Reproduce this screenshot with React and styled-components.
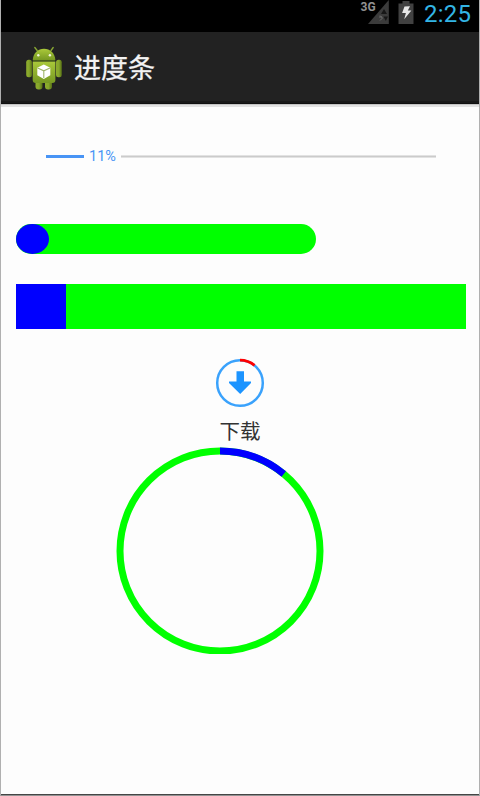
import React from "react";
import styled, { createGlobalStyle } from "styled-components";

const Global = createGlobalStyle`
  * { box-sizing: border-box; }
  body { margin: 0; background: #fdfdfd; }
`;

const Screen = styled.div`
  width: 480px;
  height: 796px;
  display: flex;
  flex-direction: column;
  overflow: hidden;
  background: #fdfdfd;
  border: 1px solid #b0b0b0;
  border-top: 0;
  border-bottom-color: #929292;
  font-family: Roboto, "Noto Sans CJK SC", sans-serif;
`;

const StatusBar = styled.header`
  height: 32px;
  flex: none;
  display: flex;
  justify-content: flex-end;
  background: #000;
`;

const StatusIcons = styled.svg`
  display: block;
  width: 56px;
  height: 32px;
`;

const Clock = styled.time`
  width: 48px;
  margin: 0 7px 0 8px;
  font-size: 24px;
  line-height: 28px;
  letter-spacing: 0.2px;
  white-space: nowrap;
  color: #33b5e5;
`;

const ActionBar = styled.div`
  height: 72px;
  flex: none;
  display: flex;
  align-items: center;
  padding-left: 23px;
  background: linear-gradient(#222 0 69px, #191919 69px 71px, #101010 71px);
`;

const Robot = styled.svg`
  display: block;
  width: 40px;
  height: 48px;
`;

const Title = styled.h1`
  margin: 2px 0 0 10px;
  font-size: 27px;
  line-height: 40px;
  font-weight: 400;
  -webkit-text-stroke: 0.3px #f3f3f3;
  color: #f3f3f3;
`;

const Shadow = styled.div`
  height: 3px;
  flex: none;
  background: linear-gradient(#c4c4c4 0 1px, #e3e3e3 1px 3px);
`;

const Content = styled.main`
  flex: 1;
  display: flex;
  flex-direction: column;
  padding-left: 15px;
`;

const NumberProgress = styled.div`
  width: 390px;
  height: 20px;
  margin: 39px 0 0 30px;
  display: flex;
  align-items: center;
`;

const Reached = styled.div`
  width: 38px;
  height: 3px;
  margin-top: 1px;
  background: #4894f5;
`;

const Percent = styled.span`
  width: 37px;
  padding-top: 2px;
  text-align: center;
  font-size: 14.5px;
  line-height: 20px;
  color: #4894f5;
`;

const Unreached = styled.div`
  flex: 1;
  height: 3px;
  margin-top: 1px;
  background: linear-gradient(#e2e2e2 0 1px, #cbcbcb 1px 2px, #e2e2e2 2px);
`;

const Track = styled.div`
  width: ${(p) => p.$width}px;
  height: ${(p) => p.$height}px;
  margin-top: ${(p) => p.$gap}px;
  border-radius: ${(p) => p.$radius || 0}px;
  background: #00ff00;
`;

const Fill = styled.div`
  width: ${(p) => p.$width}px;
  height: 100%;
  border-radius: ${(p) => (p.$round ? "50%" : "0")};
  background: #0000ff;
`;

const Download = styled.div`
  width: 60px;
  margin: 29px 0 0 194px;
  display: flex;
  flex-direction: column;
  align-items: center;
`;

const DownloadIcon = styled.svg`
  display: block;
  width: 50px;
  height: 50px;
`;

const Caption = styled.span`
  height: 38px;
  font-size: 20.5px;
  line-height: 49px;
  color: #333;
`;

const Ring = styled.svg`
  display: block;
  width: 208px;
  height: 208px;
  margin-left: 100px;
`;

const BottomEdge = styled.div`
  height: 1px;
  flex: none;
  background: #454545;
`;

const arc = (cx, cy, r, ratio) => {
  const a = ratio * Math.PI * 2;
  return `M${cx} ${cy - r}A${r} ${r} 0 0 1 ${cx + r * Math.sin(a)} ${cy - r * Math.cos(a)}`;
};

function RobotIcon() {
  return (
    <Robot viewBox="0 0 40 48">
      <defs>
        <linearGradient id="skin" x1="0" y1="0" x2="0" y2="1">
          <stop offset="0" stopColor="#aac93a" />
          <stop offset="1" stopColor="#769822" />
        </linearGradient>
        <linearGradient id="limb" x1="0" y1="0" x2="1" y2="0">
          <stop offset="0" stopColor="#8eac2d" />
          <stop offset="0.5" stopColor="#87a72b" />
          <stop offset="1" stopColor="#566f16" />
        </linearGradient>
      </defs>
      <path d="M13.2 6.5 10.8 3.5M27 6.5 29.2 3.5" stroke="#8aa934" strokeWidth="1.3" strokeLinecap="round" />
      <rect x="11.5" y="34" width="7" height="11.5" rx="3" fill="url(#limb)" />
      <rect x="21" y="34" width="7" height="11.5" rx="3" fill="url(#limb)" />
      <rect x="2.2" y="15.8" width="5.8" height="17.5" rx="2.5" fill="url(#limb)" />
      <rect x="32" y="15.8" width="5.8" height="17.5" rx="2.5" fill="url(#limb)" />
      <path d="M8.7 16.2C9.3 8.8 14 4.8 20 4.8S30.8 8.8 31.4 16.2Z" fill="url(#skin)" />
      <path d="M8.7 17.4H31.4V36Q31.4 39 28.4 39H11.7Q8.7 39 8.7 36Z" fill="url(#skin)" />
      <path d="M9 16.8H31" stroke="#55701a" strokeWidth="0.9" />
      <circle cx="14.3" cy="11.3" r="1.2" fill="#f2f5dd" />
      <circle cx="25.9" cy="11.3" r="1.2" fill="#f2f5dd" />
      <path d="m19.8 20.5 6.5 3.2v7.6l-6.5 3.6-6.5-3.6v-7.6Z" fill="#fff" />
      <path d="m13.6 24 6.2 2.8 6.2-2.8M19.8 26.8v7.3" fill="none" stroke="#a0b56a" strokeWidth="1.1" />
    </Robot>
  );
}

function SignalAndBattery() {
  return (
    <StatusIcons viewBox="0 0 56 32">
      <path d="M28.8 0V24H8Z" fill="#3b3b3b" />
      <path d="m24 9 3 5h-6Z" fill="#171717" />
      <path d="m20 15.5 2.5 2.5-2.5 2.5M19 17h3" fill="none" stroke="#777" strokeWidth="0.8" />
      <path d="M23.5 16.5H28l-2.2 4.5Z" fill="#171717" />
      <text x="0.5" y="11" fill="#929292" stroke="#000" strokeWidth="1.5" paintOrder="stroke" fontSize="12" fontWeight="700" fontFamily="Roboto">3G</text>
      <path d="M42.5 1h7v2.5h4V24h-15V3.5h4Z" fill="#414141" />
      <path d="m44.5 6.5 5.5-.3-2.2 4.2h3.6l-7.2 8.8 1.7-6.1h-3.8Z" fill="#e8e8e8" />
    </StatusIcons>
  );
}

export default function App() {
  const progress = 0.11;
  return (
    <>
      <Global />
      <Screen>
        <StatusBar>
          <SignalAndBattery />
          <Clock>2:25</Clock>
        </StatusBar>
        <ActionBar>
          <RobotIcon />
          <Title>进度条</Title>
        </ActionBar>
        <Shadow />
        <Content>
          <NumberProgress>
            <Reached />
            <Percent>11%</Percent>
            <Unreached />
          </NumberProgress>
          <Track $width={300} $height={30} $gap={58} $radius={15}>
            <Fill $width={33} $round />
          </Track>
          <Track $width={450} $height={45} $gap={30}>
            <Fill $width={50} />
          </Track>
          <Download>
            <DownloadIcon viewBox="0 0 50 50">
              <circle cx="25" cy="25" r="22.8" fill="none" stroke="#3aa2fc" strokeWidth="2.5" />
              <path d={arc(25, 25, 22.8, progress)} fill="none" stroke="#ff0000" strokeWidth="2.8" />
              <path d="M21.5 13.2h7.5v10.3h7v1.5L25.2 36 14 25v-1.5h7.5Z" fill="#1c94ff" />
            </DownloadIcon>
            <Caption>下载</Caption>
          </Download>
          <Ring viewBox="0 0 208 208">
            <circle cx="104" cy="105" r="100" fill="none" stroke="#00ff00" strokeWidth="7" />
            <path d={arc(104, 105, 100, progress)} fill="none" stroke="#0000ff" strokeWidth="7" />
          </Ring>
        </Content>
        <BottomEdge />
      </Screen>
    </>
  );
}
